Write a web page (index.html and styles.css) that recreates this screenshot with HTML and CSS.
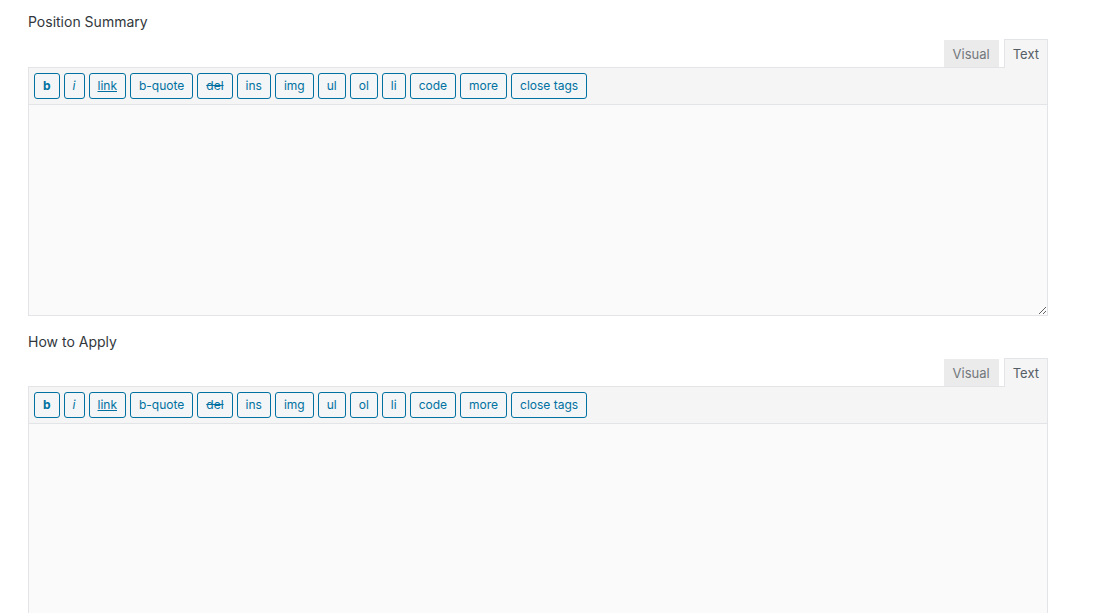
FILE: index.html
```html
<!DOCTYPE html>
<html lang="en">
<head>
    <meta charset="UTF-8">
    <meta name="viewport" content="width=device-width, initial-scale=1.0">
    <title>Job Listing Fields</title>
    <link rel="stylesheet" href="styles.css">
</head>
<body>
    <div class="container">
        <!-- Position Summary -->
        <div class="field">
            <label class="field-label" for="position_summary">Position Summary</label>
            <div class="editor">
                <div class="editor-tabs">
                    <button type="button" class="switch-editor">Visual</button>
                    <button type="button" class="switch-editor active">Text</button>
                </div>
                <div class="quicktags">
                    <button type="button" class="qt-btn qt-b">b</button>
                    <button type="button" class="qt-btn qt-i">i</button>
                    <button type="button" class="qt-btn qt-link">link</button>
                    <button type="button" class="qt-btn">b-quote</button>
                    <button type="button" class="qt-btn qt-del">del</button>
                    <button type="button" class="qt-btn">ins</button>
                    <button type="button" class="qt-btn">img</button>
                    <button type="button" class="qt-btn">ul</button>
                    <button type="button" class="qt-btn">ol</button>
                    <button type="button" class="qt-btn">li</button>
                    <button type="button" class="qt-btn">code</button>
                    <button type="button" class="qt-btn">more</button>
                    <button type="button" class="qt-btn">close tags</button>
                </div>
                <textarea id="position_summary" class="editor-area"></textarea>
            </div>
        </div>

        <!-- How to Apply -->
        <div class="field">
            <label class="field-label" for="how_to_apply">How to Apply</label>
            <div class="editor">
                <div class="editor-tabs">
                    <button type="button" class="switch-editor">Visual</button>
                    <button type="button" class="switch-editor active">Text</button>
                </div>
                <div class="quicktags">
                    <button type="button" class="qt-btn qt-b">b</button>
                    <button type="button" class="qt-btn qt-i">i</button>
                    <button type="button" class="qt-btn qt-link">link</button>
                    <button type="button" class="qt-btn">b-quote</button>
                    <button type="button" class="qt-btn qt-del">del</button>
                    <button type="button" class="qt-btn">ins</button>
                    <button type="button" class="qt-btn">img</button>
                    <button type="button" class="qt-btn">ul</button>
                    <button type="button" class="qt-btn">ol</button>
                    <button type="button" class="qt-btn">li</button>
                    <button type="button" class="qt-btn">code</button>
                    <button type="button" class="qt-btn">more</button>
                    <button type="button" class="qt-btn">close tags</button>
                </div>
                <textarea id="how_to_apply" class="editor-area"></textarea>
            </div>
        </div>
    </div>
</body>
</html>
```

FILE: styles.css
```css
body {
    font-family: Inter, "Noto Sans", sans-serif;
    background-color: #ffffff;
    margin: 0;
    padding: 0;
}

.container {
    width: 1020px;
    padding: 12px 0 0 28px;
}

.field {
    margin-bottom: 16px;
}

.field-label {
    display: block;
    font-size: 14px;
    line-height: 20px;
    color: #32373c;
    margin-bottom: 7px;
}

.field + .field .field-label {
    margin-bottom: 6px;
}

/* Visual / Text tabs */
.editor-tabs {
    display: flex;
    justify-content: flex-end;
    align-items: flex-end;
    gap: 5px;
    height: 28px;
}

.switch-editor {
    font-family: inherit;
    font-size: 13px;
    color: #72777c;
    background-color: #ebebeb;
    border: 1px solid #ebebeb;
    border-bottom: none;
    height: 27px;
    padding: 0 8px;
    margin: 0;
    cursor: pointer;
}

.switch-editor.active {
    color: #555d66;
    background-color: #f5f5f5;
    border-color: #e2e4e7;
    position: relative;
    z-index: 1;
    margin-bottom: -1px;
    height: 29px;
    padding: 0 8px;
}

/* Quicktags toolbar */
.quicktags {
    display: flex;
    flex-wrap: wrap;
    background-color: #f5f5f5;
    border: 1px solid #e2e4e7;
    border-bottom: none;
    padding: 3px;
}

.qt-btn {
    font-family: inherit;
    font-size: 12px;
    color: #0071a1;
    background-color: #f3f5f6;
    border: 1px solid #0071a1;
    border-radius: 3px;
    height: 26px;
    padding: 0 8px;
    margin: 2px;
    line-height: 24px;
    cursor: pointer;
}

.qt-btn:hover {
    background-color: #f1f1f1;
    color: #016087;
}

.qt-b {
    font-weight: bold;
}

.qt-i {
    font-style: italic;
}

.qt-link {
    text-decoration: underline;
}

.qt-del {
    text-decoration: line-through;
}

.editor-area {
    display: block;
    box-sizing: border-box;
    width: 100%;
    height: 212px;
    margin: 0;
    padding: 10px;
    background-color: #fafafa;
    border: 1px solid #e2e4e7;
    font-family: Consolas, "Liberation Mono", monospace;
    font-size: 14px;
    resize: vertical;
    outline: none;
}
```
